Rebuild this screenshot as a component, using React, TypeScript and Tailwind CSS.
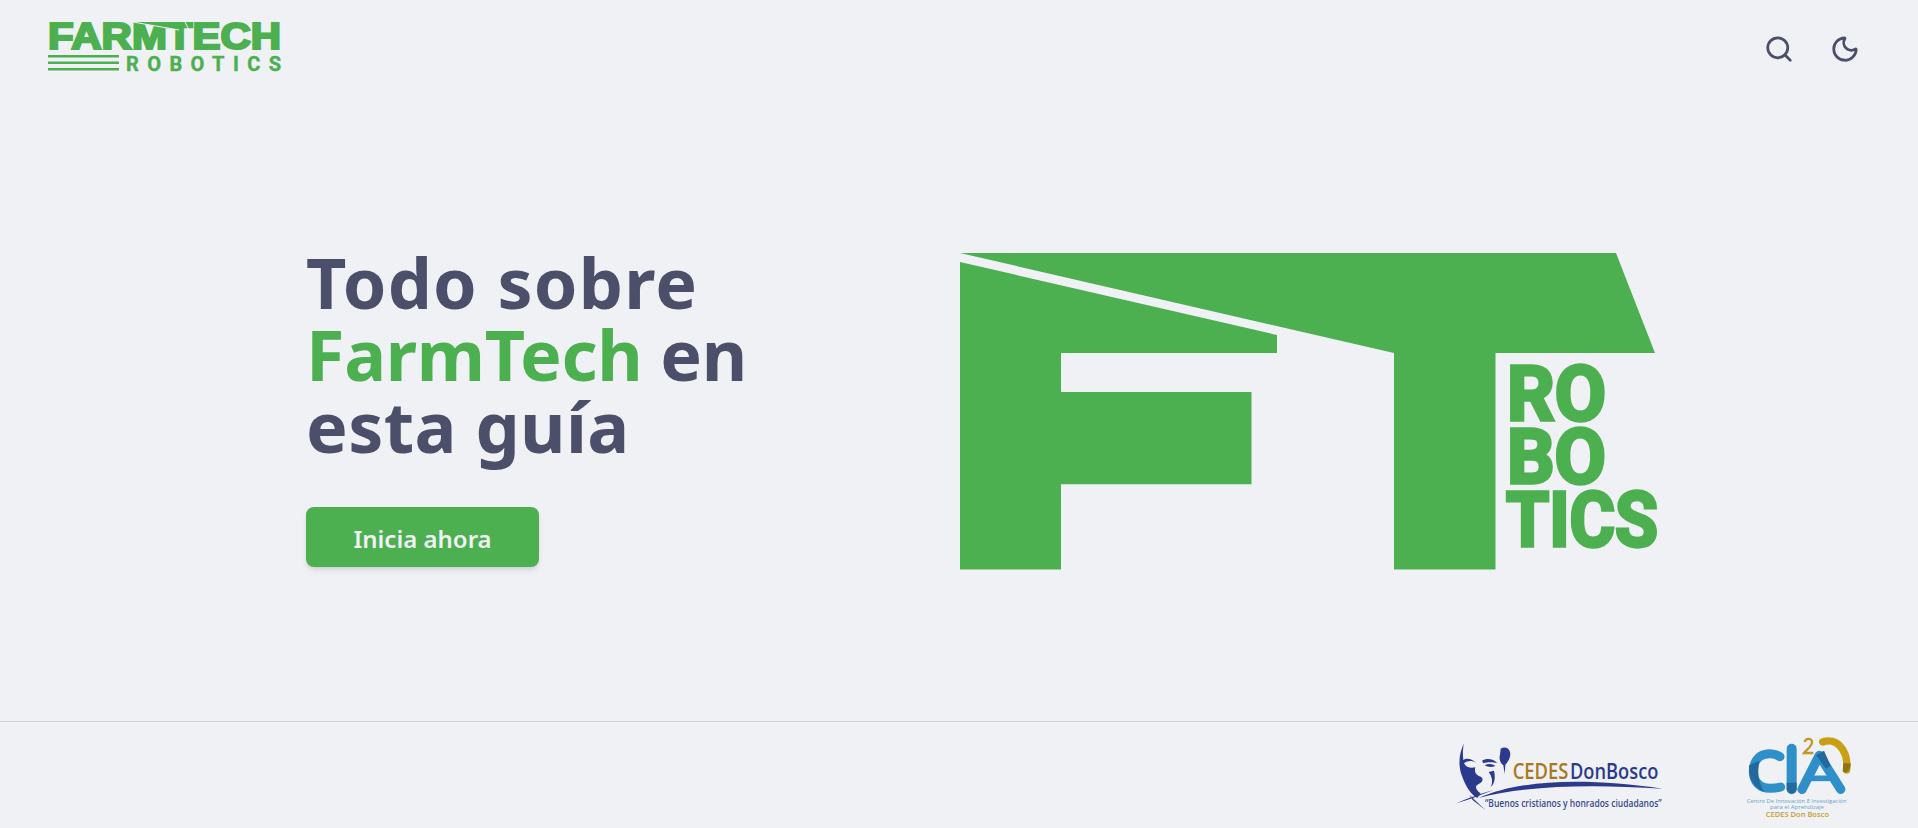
import { Search, Moon } from "lucide-react";

const SANS = "font-['Noto_Sans','Open_Sans',sans-serif]";

function TopLogo() {
  return (
    <svg width="233" height="54" viewBox="0 0 233 54" className="block overflow-visible" aria-label="FarmTech Robotics">
      <text x="0" y="26.5" textLength="233" lengthAdjust="spacingAndGlyphs" fontFamily="'Liberation Sans', sans-serif" fontWeight="700" fontSize="36" fill="#4caf50" stroke="#4caf50" strokeWidth="2.2">FARMTECH</text>
      <path d="M84 0 L131 8 L128 0 Z" fill="#4caf50" />
      <path d="M82 -0.5 L131 8 M137 0 L142 10" stroke="#eff1f5" strokeWidth="1" fill="none" />
      <rect x="0" y="33" width="71" height="2.5" fill="#4caf50" />
      <rect x="0" y="39.5" width="71" height="2.5" fill="#4caf50" />
      <rect x="0" y="46" width="71" height="2.5" fill="#4caf50" />
      <text x="78" y="49" textLength="155" fontFamily="'Roboto', sans-serif" fontWeight="700" fontSize="20" fill="#4caf50" stroke="#4caf50" strokeWidth="0.4">ROBOTICS</text>
    </svg>
  );
}

function FtMark() {
  const t = { fontFamily: "'Roboto', sans-serif", fontWeight: 700, fontSize: 76, fill: "#4caf50", stroke: "#4caf50", strokeWidth: 3.4, lengthAdjust: "spacingAndGlyphs" as const };
  return (
    <svg width="700" height="317" viewBox="0 0 700 317" className="mt-[7px] block shrink-0" aria-label="FT Robotics">
      <polygon points="0,0 656,0 695,100 535.5,100 535.5,316.6 434,316.6 434,100" fill="#4caf50" />
      <polygon points="0,9 317,82 317,100 101,100 101,139 291.5,139 291.5,231.3 101,231.3 101,316.6 0,316.6" fill="#4caf50" />
      <text x="547" y="166.5" textLength="99" {...t}>RO</text>
      <text x="547" y="229.5" textLength="99" {...t}>BO</text>
      <text x="546" y="292.5" textLength="152" {...t}>TICS</text>
    </svg>
  );
}

function CedesLogo() {
  return (
    <svg width="220" height="94" viewBox="60 36 660 282" className="block" aria-label="CEDES Don Bosco">
      <g fill="#2b3a8c">
        <path d="M102 100 C86 132 84 168 96 198 C106 226 120 252 142 264 L152 250 C138 240 132 228 146 222 C158 216 162 206 152 200 C140 196 132 188 136 172 C122 176 108 172 102 160 C112 152 126 150 138 158 C124 144 108 144 100 150 C98 130 98 118 102 100 Z" />
        <path d="M156 152 C170 144 190 146 202 160 C190 156 172 156 160 160 Z" />
        <path d="M164 166 C174 160 188 160 196 168 C186 172 174 172 164 166 Z" />
        <path d="M176 186 C186 200 190 215 182 232 C196 218 196 200 192 182 Z" />
        <path d="M212 116 C222 110 236 112 240 126 C244 140 234 156 226 164 L224 192 L220 166 C212 160 206 148 210 134 Z" />
        <path d="M146 264 C280 205 480 205 698 236 C480 222 290 226 146 264 Z" />
        <path d="M80 280 C110 266 150 252 190 240 C150 256 115 270 80 280 Z" />
        <path d="M118 254 L166 300 L128 270 Z" />
      </g>
      <text x="248" y="208" textLength="167" lengthAdjust="spacingAndGlyphs" fontFamily="'Open Sans', sans-serif" fontWeight="600" fontSize="66" fill="#a8791c">CEDES</text>
      <text x="420" y="208" textLength="265" lengthAdjust="spacingAndGlyphs" fontFamily="'Open Sans', sans-serif" fontWeight="600" fontSize="66" fill="#2b3a8c">DonBosco</text>
      <text x="165" y="290" textLength="530" lengthAdjust="spacingAndGlyphs" fontFamily="'Open Sans', sans-serif" fontWeight="600" fontSize="30" fill="#3c4a8f">“Buenos cristianos y honrados ciudadanos”</text>
    </svg>
  );
}

function CiaLogo() {
  return (
    <svg width="120" height="100" viewBox="30 6 360 300" className="block" aria-label="CIA2">
      <path d="M150 110 C135 100 115 100 105 103 C82 108 70 130 70 155 C70 185 90 205 120 205 C130 205 142 204 152 201" fill="none" stroke="#2f8fc9" strokeWidth="27" strokeLinecap="round" />
      <path d="M58 135 C52 170 72 205 104 216 C88 195 80 165 88 122 Z" fill="#23699b" />
      <path d="M185 86 L185 208" stroke="#2f8fc9" strokeWidth="30" strokeLinecap="round" />
      <path d="M170 188 L170 208 C175 225 195 225 200 208 L200 188 Z" fill="#23699b" />
      <path d="M216 208 L268 106 L332 208" fill="none" stroke="#2f8fc9" strokeWidth="28" strokeLinecap="round" strokeLinejoin="round" />
      <path d="M236 175 L305 175" stroke="#2f8fc9" strokeWidth="17" />
      <path d="M258 106 L282 92 L302 138 L288 146 Z" fill="#23699b" />
      <path d="M278 66 C318 50 356 90 350 150" fill="none" stroke="#c9a014" strokeWidth="22" strokeLinecap="round" />
      <path d="M340 130 L362 130 C362 145 356 155 348 158 L338 155 Z" fill="#8f7414" />
      <path d="M224 66 C228 52 248 54 246 68 C245 80 230 88 222 99 L250 99" fill="none" stroke="#c3982a" strokeWidth="7" />
      <text x="50" y="250" textLength="300" lengthAdjust="spacingAndGlyphs" fontFamily="'Open Sans', sans-serif" fontSize="15" fill="#6da3c9">Centro De Innovación E Investigación</text>
      <text x="120" y="267" textLength="162" lengthAdjust="spacingAndGlyphs" fontFamily="'Open Sans', sans-serif" fontSize="15" fill="#6da3c9">para el Aprendizaje</text>
      <text x="107" y="292" textLength="190" lengthAdjust="spacingAndGlyphs" fontFamily="'Open Sans', sans-serif" fontWeight="600" fontSize="19" fill="#c3a02a">CEDES Don Bosco</text>
    </svg>
  );
}

export default function App() {
  return (
    <div className={`flex h-screen flex-col overflow-hidden bg-[#eff1f5] text-[#4c4f69] ${SANS}`}>
      <header className="flex h-[98px] shrink-0 items-center justify-between pl-12 pr-[58px]">
        <TopLogo />
        <div className="flex items-center gap-9 text-[#4c4f69]">
          <Search size={30} strokeWidth={2.2} />
          <Moon size={30} strokeWidth={2.2} />
        </div>
      </header>
      <main className="flex flex-1 items-start pl-[306px] pt-[148px]">
        <div className="w-[654px] shrink-0">
          <h1 className="text-[70px] font-bold leading-[72px] text-[#4c4f69]">
            <span className="block tracking-[1.2px]">Todo sobre</span>
            <span className="block tracking-[-0.3px]"><span className="text-[#4caf50]">FarmTech</span> en</span>
            <span className="block tracking-[0.4px]">esta guía</span>
          </h1>
          <button className="mt-[45px] flex h-[60px] w-[233px] items-center justify-center rounded-lg bg-[#4caf50] pt-1 text-[24px] font-semibold text-[#eff1f5] shadow-md">
            Inicia ahora
          </button>
        </div>
        <FtMark />
      </main>
      <footer className="flex h-[107px] shrink-0 items-start justify-end gap-[70px] border-t border-[#ccd0da] pr-[58px]">
        <CedesLogo />
        <CiaLogo />
      </footer>
    </div>
  );
}
